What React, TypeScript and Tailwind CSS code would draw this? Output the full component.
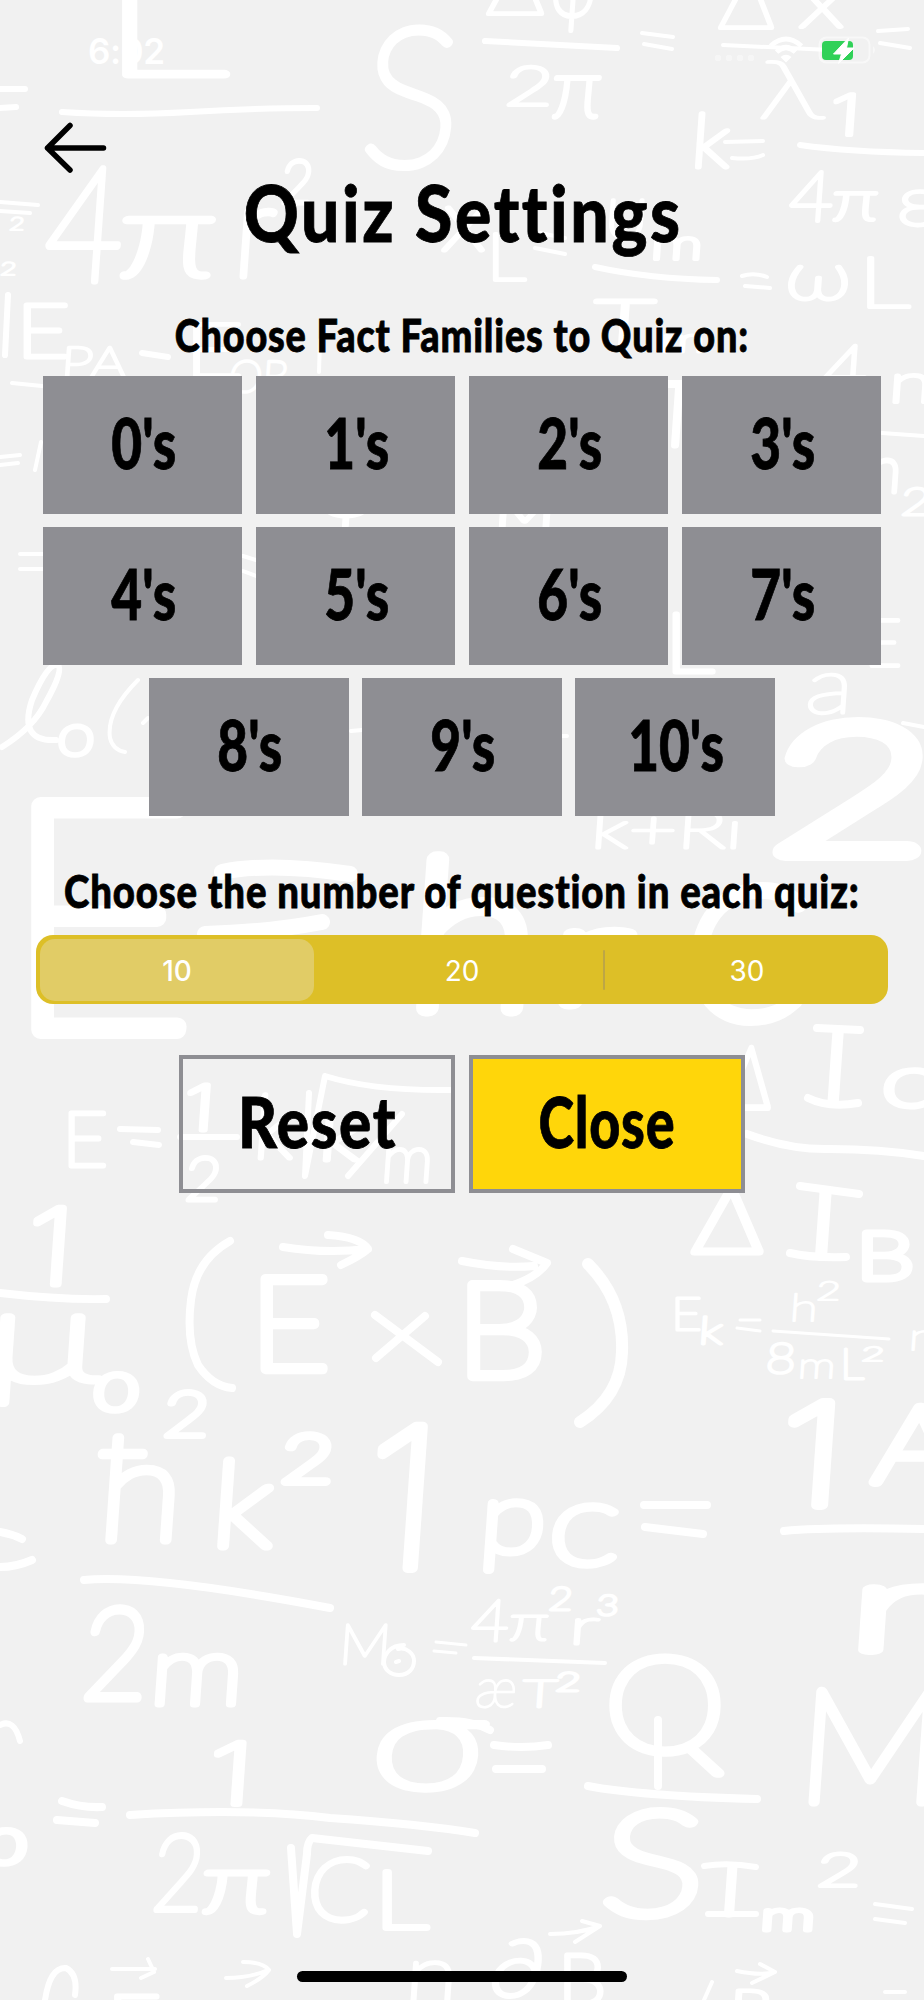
import { useState } from "react";
import clsx from "clsx";

type Glyph = [text: string, x: number, y: number, width: number, size: number, stroke?: number];

// Chalk formulas of the wallpaper: text, left, baseline, width, font size, stroke
const glyphs: Glyph[] = [
  ["L", 98, 75, 130, 150, 7],
  ["S", 358, 165, 98, 192, 9],
  ["4", 42, 281, 78, 160, 7],
  ["π", 116, 276, 98, 118, 7],
  ["r", 232, 276, 40, 130, 7],
  ["2", 280, 203, 32, 60, 5],
  ["2", 9, 230, 15, 18, 2],
  ["2", 0, 275, 16, 18, 2],
  ["E", 16, 357, 54, 74, 5],
  ["PA", 60, 378, 66, 44, 3],
  ["E", 184, 376, 60, 74, 4],
  ["OB", 228, 392, 60, 44, 3],
  ["Δ", 486, 14, 58, 80, 4],
  ["φ", 550, 16, 44, 80, 5],
  ["2", 504, 105, 48, 54, 4],
  ["π", 550, 117, 50, 82, 5],
  ["Δ", 718, 28, 56, 80, 4],
  ["x", 798, 27, 46, 76, 4],
  ["λ", 757, 118, 66, 80, 3],
  ["1", 828, 135, 32, 56, 4],
  ["k", 690, 167, 38, 74, 5],
  ["4", 788, 221, 44, 70, 4],
  ["π", 831, 220, 46, 56, 4],
  ["ε", 896, 225, 40, 68, 4],
  ["X", 442, 250, 42, 60, 5],
  ["L", 486, 280, 40, 66, 4],
  ["U", 604, 238, 42, 54, 4],
  ["m", 650, 259, 52, 42, 4],
  ["T", 592, 350, 60, 70, 5],
  ["ω", 784, 299, 66, 66, 4],
  ["L", 858, 307, 52, 70, 4],
  ["m", 660, 352, 44, 34, 3],
  ["4", 822, 392, 44, 66, 4],
  ["n", 888, 402, 44, 54, 4],
  ["n", 866, 492, 34, 64, 5],
  ["2", 900, 515, 30, 38, 3],
  ["ψ", 318, 516, 56, 54, 4],
  ["M", 494, 528, 60, 44, 4],
  ["T", 650, 445, 50, 88, 7],
  ["L", 664, 672, 50, 82, 5],
  ["E", 864, 666, 38, 66, 4],
  ["a", 804, 713, 48, 78, 3],
  ["o", 56, 755, 38, 58, 5],
  ["2", 768, 852, 160, 178, 18],
  ["k+Ri", 590, 848, 152, 52, 3],
  ["E", 2, 1030, 194, 320, 18],
  ["h", 404, 1008, 130, 206, 17],
  ["r", 548, 1003, 78, 140, 13],
  ["C", 682, 1017, 120, 180, 15],
  ["E", 62, 1166, 46, 76, 5],
  ["1", 182, 1130, 32, 62, 5],
  ["2", 184, 1200, 36, 60, 5],
  ["k", 252, 1158, 40, 88, 5],
  ["k", 318, 1160, 40, 64, 5],
  ["m", 380, 1182, 52, 66, 4],
  ["Δ", 724, 1108, 46, 86, 6],
  ["I", 816, 1104, 34, 102, 7],
  ["c", 880, 1106, 54, 72, 6],
  ["Δ", 692, 1252, 70, 92, 7],
  ["I", 804, 1257, 34, 94, 7],
  ["B", 856, 1279, 58, 66, 7],
  ["1", 24, 1284, 48, 104, 7],
  ["μ", -16, 1380, 116, 128, 8],
  ["0", 94, 1410, 42, 50, 7],
  ["E", 250, 1369, 80, 128, 10],
  ["B", 456, 1376, 90, 130, 10],
  ["2", 162, 1436, 46, 62, 6],
  ["ħ", 96, 1540, 84, 142, 9],
  ["k", 210, 1546, 60, 118, 9],
  ["2", 280, 1482, 52, 66, 8],
  ["1", 360, 1568, 76, 194, 10],
  ["p", 478, 1552, 66, 100, 8],
  ["c", 546, 1564, 72, 116, 8],
  ["1", 776, 1505, 66, 140, 10],
  ["A", 872, 1482, 86, 106, 10],
  ["E", 671, 1330, 31, 46, 3],
  ["k", 698, 1344, 24, 38, 3],
  ["h", 789, 1321, 28, 38, 2],
  ["2", 816, 1300, 24, 26, 2],
  ["8", 765, 1373, 30, 42, 3],
  ["m", 797, 1378, 38, 36, 2],
  ["L", 840, 1379, 24, 42, 3],
  ["2", 861, 1361, 23, 20, 2],
  ["n", 908, 1350, 28, 38, 2],
  ["2", 80, 1698, 66, 126, 9],
  ["m", 148, 1704, 94, 96, 7],
  ["M", 338, 1664, 52, 56, 3],
  ["4", 470, 1641, 38, 58, 3],
  ["π", 508, 1640, 40, 50, 3],
  ["2", 548, 1610, 24, 32, 3],
  ["r", 568, 1644, 30, 50, 3],
  ["3", 596, 1615, 22, 28, 3],
  ["æ", 474, 1707, 42, 54, 2],
  ["T", 522, 1707, 34, 38, 3],
  ["2", 555, 1691, 25, 26, 3],
  ["σ", 368, 1788, 116, 132, 8],
  ["Q", 604, 1752, 122, 132, 9],
  ["S", 598, 1914, 104, 144, 10],
  ["M", 794, 1802, 148, 158, 9],
  ["r", 844, 1650, 94, 124, 10],
  ["I", 714, 1915, 30, 72, 5],
  ["m", 760, 1930, 54, 40, 5],
  ["2", 816, 1886, 44, 46, 4],
  ["1", 206, 1804, 46, 84, 6],
  ["2", 150, 1910, 52, 106, 6],
  ["π", 200, 1912, 68, 82, 6],
  ["C", 306, 1920, 62, 86, 6],
  ["L", 374, 1928, 54, 80, 6],
  ["0", -16, 1863, 40, 46, 7],
  ["∂", 488, 1996, 54, 78, 5],
  ["B", 558, 2004, 48, 70, 5],
  ["n", 404, 2002, 52, 80, 4],
  ["E", 106, 2052, 56, 80, 5],
  ["P", 728, 2024, 40, 48, 4],
];

// Bars, arrows and roots, grouped by the thickness of the chalk
const strokes: { width: number; d: string }[] = [
  {
    width: 3,
    d: "M740 1320h20M737 1328l23 3M773 1331l116 8M436 1642l30 3M434 1651l22 2",
  },
  {
    width: 4,
    d: "M0 202l38 3M0 211l30 2M642 33l31 4M644 44l28 5M878 31l30-2M880 43l30 5M723 45l107 5M540 233l25 5M535 248l30 6M742 276q12-4 25 1M745 286l25 2M725 142l38-1M732 158q20 2 31-3M12 383l30 3M0 457l20-2M0 465l18-2M35 470l6-28M20 554h23M20 569h23M243 556l13 4M243 571l13 5M351 731l11-1M561 736h6M903 723l21 4M474 1658l131 5M875 1904l37 5M875 1919l30 4M550 1934q28 0 50-8M582 1921l18 5l-25 16M737 1971q24 5 38 1M760 1964l15 8l-23 11M712 1982l-8 18M885 1992h20M226 1978q24 0 42-8M243 1962q20 0 26 8q-6 8-22 16M112 1969h43M148 1959l6 13l-13 6M138 680Q106 712 110 738Q113 750 125 752M143 723l5-5M404 1645c-14 0-20 10-20 17c0 8 7 13 15 13c9 0 15-6 15-14c0-8-8-14-16-12M396 1662l3-1M882 433l42 3M320 340l-1 32",
  },
  {
    width: 6,
    d: "M0 89h25M0 108l16-1M62 112Q120 116 190 112Q260 108 317 108M485 41l132 7M800 145Q850 152 924 153M595 267Q650 279 717 280M142 353l26 4M8 295l-3 60M120 1129l38 1M133 1142l26 3M180 1137h57M309 1093l-4 83l20-100q48 15 125 14M348 1176l54-62M45 2000Q50 1967 66 1968Q78 1974 75 1995M2 747Q34 727 46 702Q64 670 58 665Q48 662 32 700Q18 742 56 740M0 1725Q14 1718 20 1741M704 1866q24-4 52 1M708 1914h48",
  },
  {
    width: 8,
    d: "M747 1134Q790 1150 830 1149Q880 1149 924 1156M0 1293Q60 1300 106 1299M230 1241Q196 1260 191 1300Q186 1340 198 1365Q212 1386 232 1388M283 1247Q325 1254 368 1249M328 1235Q360 1237 368 1249Q360 1256 341 1265M375 1315l63 47M376 1358l49-42M462 1261q40 8 72 5M513 1249l34 14q-10 14-34 22M0 1532q12 2 22 7M0 1567q16 0 32-7M644 1505h63M645 1527l58 7M784 1531q40-4 140-2M84 1580Q150 1574 330 1608M62 1801q20 7 40 6M57 1820l38 3M130 1815Q250 1808 330 1818Q420 1824 475 1833M494 1745q28 4 54 0M496 1769h46M658 1720v66M588 1786Q640 1796 757 1799M440 1721q32-1 50 9M291 1848l6 86l10-80q0-12 5-16l116 13M800 1186l59 8M790 1253q20 5 56 4M817 1028l43 2M808 1098q20 10 50 5",
  },
  { width: 12, d: "M588 1264Q624 1300 622 1352Q621 1396 580 1422" },
  { width: 16, d: "M222 872Q270 862 350 874M205 934Q270 932 322 922" },
];

const families = [
  ["0", "1", "2", "3"],
  ["4", "5", "6", "7"],
  ["8", "9", "10"],
];

const counts = [10, 20, 30];

const marker =
  "font-['Marker_Felt','Lato',sans-serif] font-black text-black whitespace-nowrap [-webkit-text-stroke:0.8px_black]";

function Wallpaper() {
  return (
    <svg
      aria-hidden="true"
      viewBox="0 0 924 2000"
      className="absolute inset-0 h-[2000px] w-[924px] overflow-hidden font-thin"
    >
      <g fill="white" stroke="white" strokeLinejoin="round">
        {glyphs.map(([text, x, y, width, size, stroke = 3], i) => (
          <text
            key={i}
            transform={`translate(${x} ${y}) skewX(${"EBLQ".includes(text) ? 0 : -4})`}
            className={
              text === "1"
                ? "font-['Inter',sans-serif]"
                : "font-['Lato','Noto_Sans',sans-serif]"
            }
            fontSize={size}
            strokeWidth={stroke}
            textLength={width}
            lengthAdjust="spacingAndGlyphs"
          >
            {text}
          </text>
        ))}
      </g>
      <g fill="none" stroke="white" strokeLinecap="round" strokeLinejoin="round">
        {strokes.map((s) => (
          <path key={s.width} d={s.d} strokeWidth={s.width} />
        ))}
      </g>
    </svg>
  );
}

function StatusBar() {
  return (
    <div className="flex h-[102px] items-start justify-between pt-[30px] pr-[48px] pl-[88px]">
      <span className="font-['Inter',sans-serif] text-[35px] leading-[42px] font-semibold tracking-[-0.5px] text-white">
        6:02
      </span>
      <div className="flex items-end gap-[14px] pt-[6px]">
        <div className="flex gap-[5px] pb-[3px]">
          {[0, 1, 2, 3].map((n) => (
            <span key={n} className="size-[6px] rounded-[2px] bg-white/40" />
          ))}
        </div>
        <svg viewBox="0 0 36 28" className="h-[28px] w-[36px]" fill="none" stroke="white">
          <path d="M2.5 10Q18-4 33.5 10" strokeWidth="5" />
          <path d="M8.5 16Q18 7 27.5 16" strokeWidth="5" />
          <path d="M12.500 21Q18 16.500 23.500 21L18 26.500Z" fill="white" stroke="none" />
        </svg>
        <svg viewBox="0 0 58 28" className="h-[28px] w-[58px]">
          <rect x="1.500" y="1.500" width="50" height="25" rx="7" fill="none" stroke="white" strokeOpacity="0.5" strokeWidth="2" />
          <path d="M55 10q4 4 0 8z" fill="white" fillOpacity="0.5" />
          <rect x="4" y="5" width="31" height="19" rx="4" fill="#30d158" />
          <path
            d="M30.500 2L15.500 18h8l-3 9.500L36 12h-7.500z"
            fill="white"
            stroke="white"
            strokeWidth="1"
            strokeLinejoin="round"
          />
        </svg>
      </div>
    </div>
  );
}

export default function App() {
  const [selected, setSelected] = useState<string[]>([]);
  const [count, setCount] = useState(10);

  const toggle = (family: string) =>
    setSelected((prev) =>
      prev.includes(family) ? prev.filter((f) => f !== family) : [...prev, family]
    );

  const reset = () => {
    setSelected([]);
    setCount(10);
  };

  return (
    <div className="relative h-[2000px] w-[924px] overflow-hidden bg-[#f1f1f1]">
      <Wallpaper />
      <div className="relative flex h-full flex-col">
        <StatusBar />

        <button aria-label="Back" className="mt-[18px] ml-[42px] h-[56px] w-[68px] cursor-pointer">
          <svg
            viewBox="0 0 68 56"
            className="h-[56px] w-[68px]"
            fill="none"
            stroke="black"
            strokeWidth="5.500"
            strokeLinecap="round"
            strokeLinejoin="round"
          >
            <path d="M28 5.500L5.500 28L28 50M5.500 28H61.500" />
          </svg>
        </button>

        <h1 className={clsx(marker, "-mt-[11px] flex h-[94px] items-center justify-center text-[78px] leading-[94px]")}>
          <span className="ml-[3px] scale-x-[0.87] tracking-[3px]">Quiz Settings</span>
        </h1>

        <h2 className={clsx(marker, "mt-[49px] flex h-[56px] items-center justify-center text-[45px]")}>
          <span className="scale-x-[0.84] tracking-[1px]">Choose Fact Families to Quiz on:</span>
        </h2>

        <div className="mt-[12px] flex flex-col gap-[13.500px]">
          {families.map((row) => (
            <div key={row[0]} className="flex justify-center gap-[13.330px]">
              {row.map((family) => (
                <button
                  key={family}
                  onClick={() => toggle(family)}
                  className={clsx(
                    marker,
                    "flex h-[137.500px] w-[199.750px] cursor-pointer items-center justify-center pb-[5px] pl-[2px] text-[70px]",
                    selected.includes(family) ? "bg-[#ffd60a]" : "bg-[#8e8e93]"
                  )}
                >
                  <span className="scale-x-[0.76]">{family}'s</span>
                </button>
              ))}
            </div>
          ))}
        </div>

        <h2 className={clsx(marker, "mt-[48px] flex h-[56px] items-center justify-center text-[45px]")}>
          <span className="scale-x-[0.852] tracking-[1px]">Choose the number of question in each quiz:</span>
        </h2>

        <div className="mx-auto mt-[15px] flex h-[69px] w-[852px] gap-[11px] rounded-[17px] bg-[#ddbf27] p-[4px] pb-[3px] font-['Inter',sans-serif] text-[28px] text-white">
          {counts.map((n, i) => (
            <button
              key={n}
              onClick={() => setCount(n)}
              className={clsx(
                "relative h-full flex-1 cursor-pointer rounded-[15px] pt-[3px]",
                count === n && "bg-[#e1cc66] font-medium"
              )}
            >
              {n}
              {i < 2 && count !== n && count !== counts[i + 1] && (
                <span className="absolute top-[11px] right-[-6px] h-[40px] w-[2px] rounded-full bg-[#bda645]" />
              )}
            </button>
          ))}
        </div>

        <div className="mt-[51px] flex justify-center gap-[13.500px]">
          <button
            onClick={reset}
            className={clsx(marker, "flex h-[138px] w-[276.500px] cursor-pointer items-center justify-center border-4 border-[#8e8e93] pb-[4px] pl-[2px] text-[70px]")}
          >
            <span className="scale-x-[0.86] tracking-[2px]">Reset</span>
          </button>
          <button className={clsx(marker, "flex h-[138px] w-[276.500px] cursor-pointer items-center justify-center border-4 border-[#8e8e93] bg-[#ffd60a] pb-[4px] text-[70px]")}>
            <span className="scale-x-[0.77] tracking-[1px]">Close</span>
          </button>
        </div>

        <div className="mx-auto mt-auto mb-[18px] h-[11px] w-[330px] rounded-full bg-black" />
      </div>
    </div>
  );
}
